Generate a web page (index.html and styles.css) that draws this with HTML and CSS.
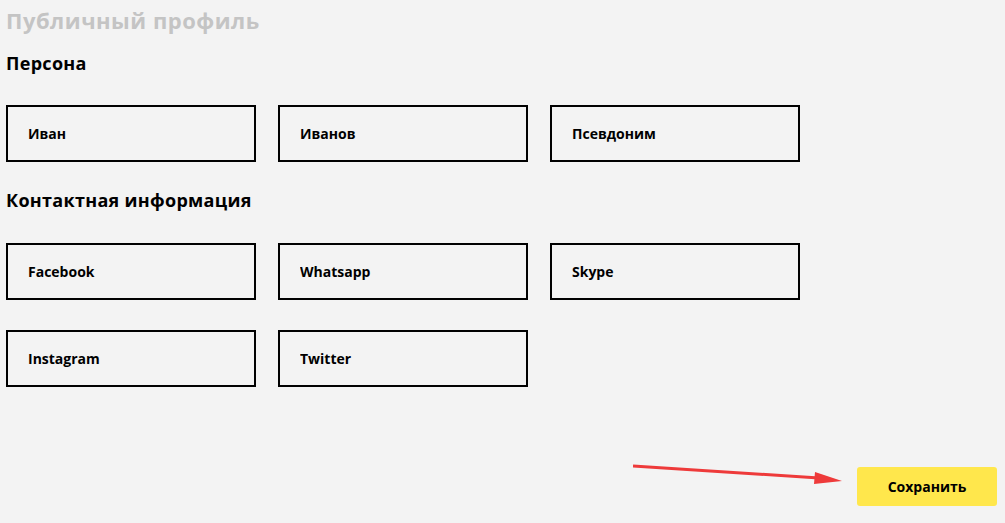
FILE: index.html
```html
<!DOCTYPE html>
<html>
  <head>
    <meta charset="UTF-8">
    <title>Публичный профиль</title>
    <link rel="stylesheet" href="styles.css">
  </head>
  <body>
    <div class="page">
      <h1 class="page-title">Публичный профиль</h1>

      <h2 class="section-title">Персона</h2>
      <div class="fields">
        <input class="field" type="text" value="Иван">
        <input class="field" type="text" value="Иванов">
        <input class="field" type="text" value="Псевдоним">
      </div>

      <h2 class="section-title section-title--contacts">Контактная информация</h2>
      <div class="fields fields--contacts">
        <input class="field" type="text" value="Facebook">
        <input class="field" type="text" value="Whatsapp">
        <input class="field" type="text" value="Skype">
        <input class="field" type="text" value="Instagram">
        <input class="field" type="text" value="Twitter">
      </div>

      <div class="actions">
        <!-- pointer to the save button -->
        <svg class="hint-arrow" width="212" height="24" viewBox="0 0 212 24">
          <line x1="0" y1="3" x2="186" y2="15" stroke="#ee3a3a" stroke-width="3"/>
          <polygon points="182,9 209,18 181,21" fill="#ee3a3a"/>
        </svg>
        <button class="save-button" type="button">Сохранить</button>
      </div>
    </div>
  </body>
</html>
```

FILE: styles.css
```css
body {
  margin: 0;
  background-color: #F3F3F3;
  font-family: 'Open Sans', sans-serif;
  color: #000000;
}

.page {
  padding: 7px 8px 0 6px;
}

.page-title {
  margin: 0;
  font-size: 22px;
  line-height: 26px;
  font-weight: 700;
  letter-spacing: 0.5px;
  color: #C4C4C4;
}

.section-title {
  margin: 18px 0 0;
  font-size: 18px;
  line-height: 24px;
  font-weight: 700;
  letter-spacing: 0.3px;
}

.section-title--contacts {
  margin-top: 26px;
}

.fields {
  display: grid;
  grid-template-columns: repeat(3, 250px);
  column-gap: 22px;
  row-gap: 30px;
  margin-top: 30px;
}

.fields--contacts {
  margin-top: 31px;
}

.field {
  box-sizing: border-box;
  height: 57px;
  width: 250px;
  padding: 0 20px;
  border: 2px solid #000000;
  border-radius: 0;
  background-color: transparent;
  font-family: inherit;
  font-size: 14px;
  font-weight: 700;
  color: #000000;
  outline: none;
}

.actions {
  display: flex;
  justify-content: flex-end;
  align-items: flex-start;
  gap: 12px;
  margin-top: 80px;
}

.hint-arrow {
  margin-top: -4px;
}

.save-button {
  width: 140px;
  height: 39px;
  border: none;
  border-radius: 3px;
  background-color: #FFE74C;
  font-family: inherit;
  font-size: 14px;
  font-weight: 700;
  color: #000000;
  cursor: pointer;
}
```
